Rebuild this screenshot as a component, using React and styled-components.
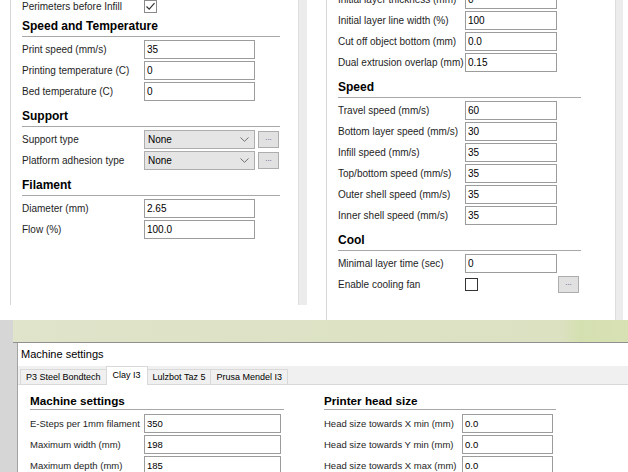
import React from "react";
import styled, { createGlobalStyle } from "styled-components";

const GlobalStyle = createGlobalStyle`
  html, body {
    margin: 0;
    padding: 0;
    background: #fff;
  }
  body {
    font-family: "Liberation Sans", Arial, sans-serif;
    color: #1e1e1e;
    overflow: hidden;
  }
`;

const Page = styled.div`
  width: 628px;
  height: 472px;
  overflow: hidden;
  display: flex;
  flex-direction: column;
`;

const TopArea = styled.div`
  height: 320px;
  flex: none;
  display: flex;
  align-items: flex-start;
  padding-left: 10px;
  background: #fff;
`;

const Pane = styled.div`
  box-sizing: border-box;
  width: ${(p) => p.$width}px;
  height: ${(p) => p.$height}px;
  margin-left: ${(p) => p.$offset || 0}px;
  padding-left: 11px;
  border-left: 1px solid #d6d6d6;
  overflow: hidden;
  background: #fff;
`;

const ScrollTrack = styled.div`
  box-sizing: border-box;
  width: ${(p) => p.$width}px;
  height: ${(p) => p.$height}px;
  background: #ececec;
  border-left: 1px solid #dedede;
`;

const PaneBody = styled.div`
  display: flex;
  flex-direction: column;
  margin-top: ${(p) => p.$shift}px;
`;

const Section = styled.section`
  margin-top: ${(p) => (p.$gap === undefined ? 8 : p.$gap)}px;
`;

const SectionTitle = styled.h3`
  margin: 0 0 3px;
  width: ${(p) => p.$width}px;
  font-size: 12px;
  line-height: 15px;
  font-weight: bold;
  color: #000;
  padding-bottom: 2px;
  border-bottom: 1px solid #a8a8a8;
`;

const Rows = styled.div`
  display: flex;
  flex-direction: column;
  gap: 2px;
`;

const Row = styled.div`
  display: flex;
  align-items: center;
  height: 19px;
`;

const Label = styled.span`
  flex: none;
  width: ${(p) => p.$width}px;
  font-size: ${(p) => p.$size || 10}px;
  white-space: nowrap;
  color: #1e1e1e;
`;

const TextInput = styled.input`
  box-sizing: border-box;
  width: ${(p) => p.$width}px;
  height: 19px;
  margin: 0;
  padding: 0 0 0 2px;
  border: 1px solid #9c9c9c;
  background: #fff;
  font-family: "Liberation Sans", Arial, sans-serif;
  font-size: ${(p) => p.$size || 10}px;
  color: #000;
  outline: none;
`;

const Select = styled.div`
  box-sizing: border-box;
  width: ${(p) => p.$width}px;
  height: 19px;
  display: flex;
  align-items: center;
  justify-content: space-between;
  padding: 0 5px 0 3px;
  background: #e5e5e5;
  border: 1px solid #adadad;
  font-size: 10px;
  color: #000;
`;

const DotsButton = styled.div`
  box-sizing: border-box;
  width: 21px;
  height: 17px;
  margin-left: ${(p) => p.$gap || 3}px;
  display: flex;
  align-items: center;
  justify-content: center;
  background: #e1e1e1;
  border: 1px solid #adadad;
  font-size: 8px;
  line-height: 1;
  color: #5a4a8a;
  padding-bottom: 3px;
`;

const CheckBox = styled.div`
  box-sizing: border-box;
  width: 13px;
  height: 13px;
  display: flex;
  align-items: center;
  justify-content: center;
  background: #fff;
  border: 1px solid ${(p) => (p.$checked ? "#8a8a8a" : "#333")};
`;

const LowerArea = styled.div`
  flex: 1;
  display: flex;
  flex-direction: column;
  background: #d6d6d6;
`;

const TitleBand = styled.div`
  flex: none;
  height: 22px;
  margin-left: 13px;
  background: linear-gradient(90deg, #dfe4ca 0%, #dbe1c1 89%, #d5e0b1 92%, #d7e1b4 100%);
  border-bottom: 1px solid #8f8f8f;
`;

const Window = styled.div`
  flex: 1;
  margin-left: 17px;
  display: flex;
  flex-direction: column;
  background: #fff;
  border-left: 1px solid #a3a3a3;
`;

const WindowTitle = styled.div`
  height: 23px;
  box-sizing: border-box;
  padding: 4px 0 0 3px;
  font-size: 11px;
  line-height: 15px;
  color: #000;
`;

const TabBar = styled.div`
  box-sizing: border-box;
  height: 19px;
  display: flex;
  align-items: flex-end;
  padding-left: 2px;
  background: #f0f0f0;
  border-bottom: 1px solid #d9d9d9;
`;

const Tab = styled.div`
  box-sizing: border-box;
  height: ${(p) => (p.$active ? 19 : 15)}px;
  margin-bottom: ${(p) => (p.$active ? -1 : 0)}px;
  margin-left: -1px;
  padding: ${(p) => (p.$active ? "2px 6px 0" : "1px 5px 0")};
  background: ${(p) => (p.$active ? "#fff" : "#f0f0f0")};
  border: 1px solid #d9d9d9;
  border-bottom: none;
  font-size: 9px;
  line-height: 12px;
  white-space: nowrap;
  color: #000;
  position: relative;
  z-index: ${(p) => (p.$active ? 1 : 0)};
  &:first-child {
    margin-left: 0;
  }
`;

const WindowBody = styled.div`
  display: flex;
  gap: 40px;
  padding: 9px 0 0 12px;
`;

const Column = styled.div`
  display: flex;
  flex-direction: column;
`;

const DialogTitle = styled.h3`
  margin: 0 0 4px;
  width: ${(p) => p.$width}px;
  font-size: 11.7px;
  line-height: 14px;
  font-weight: bold;
  color: #000;
  padding-bottom: 1px;
  border-bottom: 1px solid #a8a8a8;
`;

const Check = () => (
  <svg width="11" height="11" viewBox="0 0 11 11">
    <path d="M1.5 5.5 L4.2 8.2 L9.5 2.2" fill="none" stroke="#333" strokeWidth="1.2" />
  </svg>
);

const Chevron = () => (
  <svg width="9" height="5" viewBox="0 0 9 5">
    <path d="M0.5 0.5 L4.5 4.3 L8.5 0.5" fill="none" stroke="#707070" strokeWidth="1" />
  </svg>
);

const Field = ({ label, value, labelWidth, inputWidth, size }) => (
  <Row>
    <Label $width={labelWidth} $size={size}>
      {label}
    </Label>
    <TextInput readOnly defaultValue={value} $width={inputWidth} $size={size} />
  </Row>
);

const ChoiceField = ({ label, value }) => (
  <Row>
    <Label $width={122}>{label}</Label>
    <Select $width={111}>
      <span>{value}</span>
      <Chevron />
    </Select>
    <DotsButton>...</DotsButton>
  </Row>
);

const leftFields = {
  speed: [
    ["Print speed (mm/s)", "35"],
    ["Printing temperature (C)", "0"],
    ["Bed temperature (C)", "0"],
  ],
  filament: [
    ["Diameter (mm)", "2.65"],
    ["Flow (%)", "100.0"],
  ],
};

const rightFields = {
  quality: [
    ["Initial layer thickness (mm)", "0"],
    ["Initial layer line width (%)", "100"],
    ["Cut off object bottom (mm)", "0.0"],
    ["Dual extrusion overlap (mm)", "0.15"],
  ],
  speed: [
    ["Travel speed (mm/s)", "60"],
    ["Bottom layer speed (mm/s)", "30"],
    ["Infill speed (mm/s)", "35"],
    ["Top/bottom speed (mm/s)", "35"],
    ["Outer shell speed (mm/s)", "35"],
    ["Inner shell speed (mm/s)", "35"],
  ],
};

const machineFields = [
  ["E-Steps per  1mm filament", "350"],
  ["Maximum width (mm)", "198"],
  ["Maximum depth (mm)", "185"],
];

const headFields = [
  ["Head size towards X min (mm)", "0.0"],
  ["Head size towards Y min (mm)", "0.0"],
  ["Head size towards X max (mm)", "0.0"],
];

const tabs = ["P3 Steel Bondtech", "Clay I3", "Lulzbot Taz 5", "Prusa Mendel I3"];

export default function App() {
  return (
    <Page>
      <GlobalStyle />
      <TopArea>
        <Pane $width={288} $height={305}>
          <PaneBody $shift={-3}>
            <Row>
              <Label $width={122}>Perimeters before Infill</Label>
              <CheckBox $checked>
                <Check />
              </CheckBox>
            </Row>
            <Section $gap={3}>
              <SectionTitle $width={258}>Speed and Temperature</SectionTitle>
              <Rows>
                {leftFields.speed.map(([l, v]) => (
                  <Field key={l} label={l} value={v} labelWidth={122} inputWidth={111} />
                ))}
              </Rows>
            </Section>
            <Section>
              <SectionTitle $width={258}>Support</SectionTitle>
              <Rows>
                <ChoiceField label="Support type" value="None" />
                <ChoiceField label="Platform adhesion type" value="None" />
              </Rows>
            </Section>
            <Section>
              <SectionTitle $width={258}>Filament</SectionTitle>
              <Rows>
                {leftFields.filament.map(([l, v]) => (
                  <Field key={l} label={l} value={v} labelWidth={122} inputWidth={111} />
                ))}
              </Rows>
            </Section>
          </PaneBody>
        </Pane>
        <ScrollTrack $width={9} $height={305} />
        <Pane $width={289} $height={320} $offset={19}>
          <PaneBody $shift={-10}>
            <Rows>
              {rightFields.quality.map(([l, v]) => (
                <Field key={l} label={l} value={v} labelWidth={127} inputWidth={92} />
              ))}
            </Rows>
            <Section>
              <SectionTitle $width={243}>Speed</SectionTitle>
              <Rows>
                {rightFields.speed.map(([l, v]) => (
                  <Field key={l} label={l} value={v} labelWidth={127} inputWidth={92} />
                ))}
              </Rows>
            </Section>
            <Section>
              <SectionTitle $width={243}>Cool</SectionTitle>
              <Rows>
                <Field label="Minimal layer time (sec)" value="0" labelWidth={127} inputWidth={92} />
                <Row>
                  <Label $width={127}>Enable cooling fan</Label>
                  <CheckBox />
                  <DotsButton $gap={80}>...</DotsButton>
                </Row>
              </Rows>
            </Section>
          </PaneBody>
        </Pane>
        <ScrollTrack $width={8} $height={320} />
      </TopArea>
      <LowerArea>
        <TitleBand />
        <Window>
          <WindowTitle>Machine settings</WindowTitle>
          <TabBar>
            {tabs.map((t) => (
              <Tab key={t} $active={t === "Clay I3"}>
                {t}
              </Tab>
            ))}
          </TabBar>
          <WindowBody>
            <Column>
              <DialogTitle $width={254}>Machine settings</DialogTitle>
              <Rows>
                {machineFields.map(([l, v]) => (
                  <Field key={l} label={l} value={v} labelWidth={114} inputWidth={137} size={9.5} />
                ))}
              </Rows>
            </Column>
            <Column>
              <DialogTitle $width={232}>Printer head size</DialogTitle>
              <Rows>
                {headFields.map(([l, v]) => (
                  <Field key={l} label={l} value={v} labelWidth={138} inputWidth={91} size={9.5} />
                ))}
              </Rows>
            </Column>
          </WindowBody>
        </Window>
      </LowerArea>
    </Page>
  );
}
